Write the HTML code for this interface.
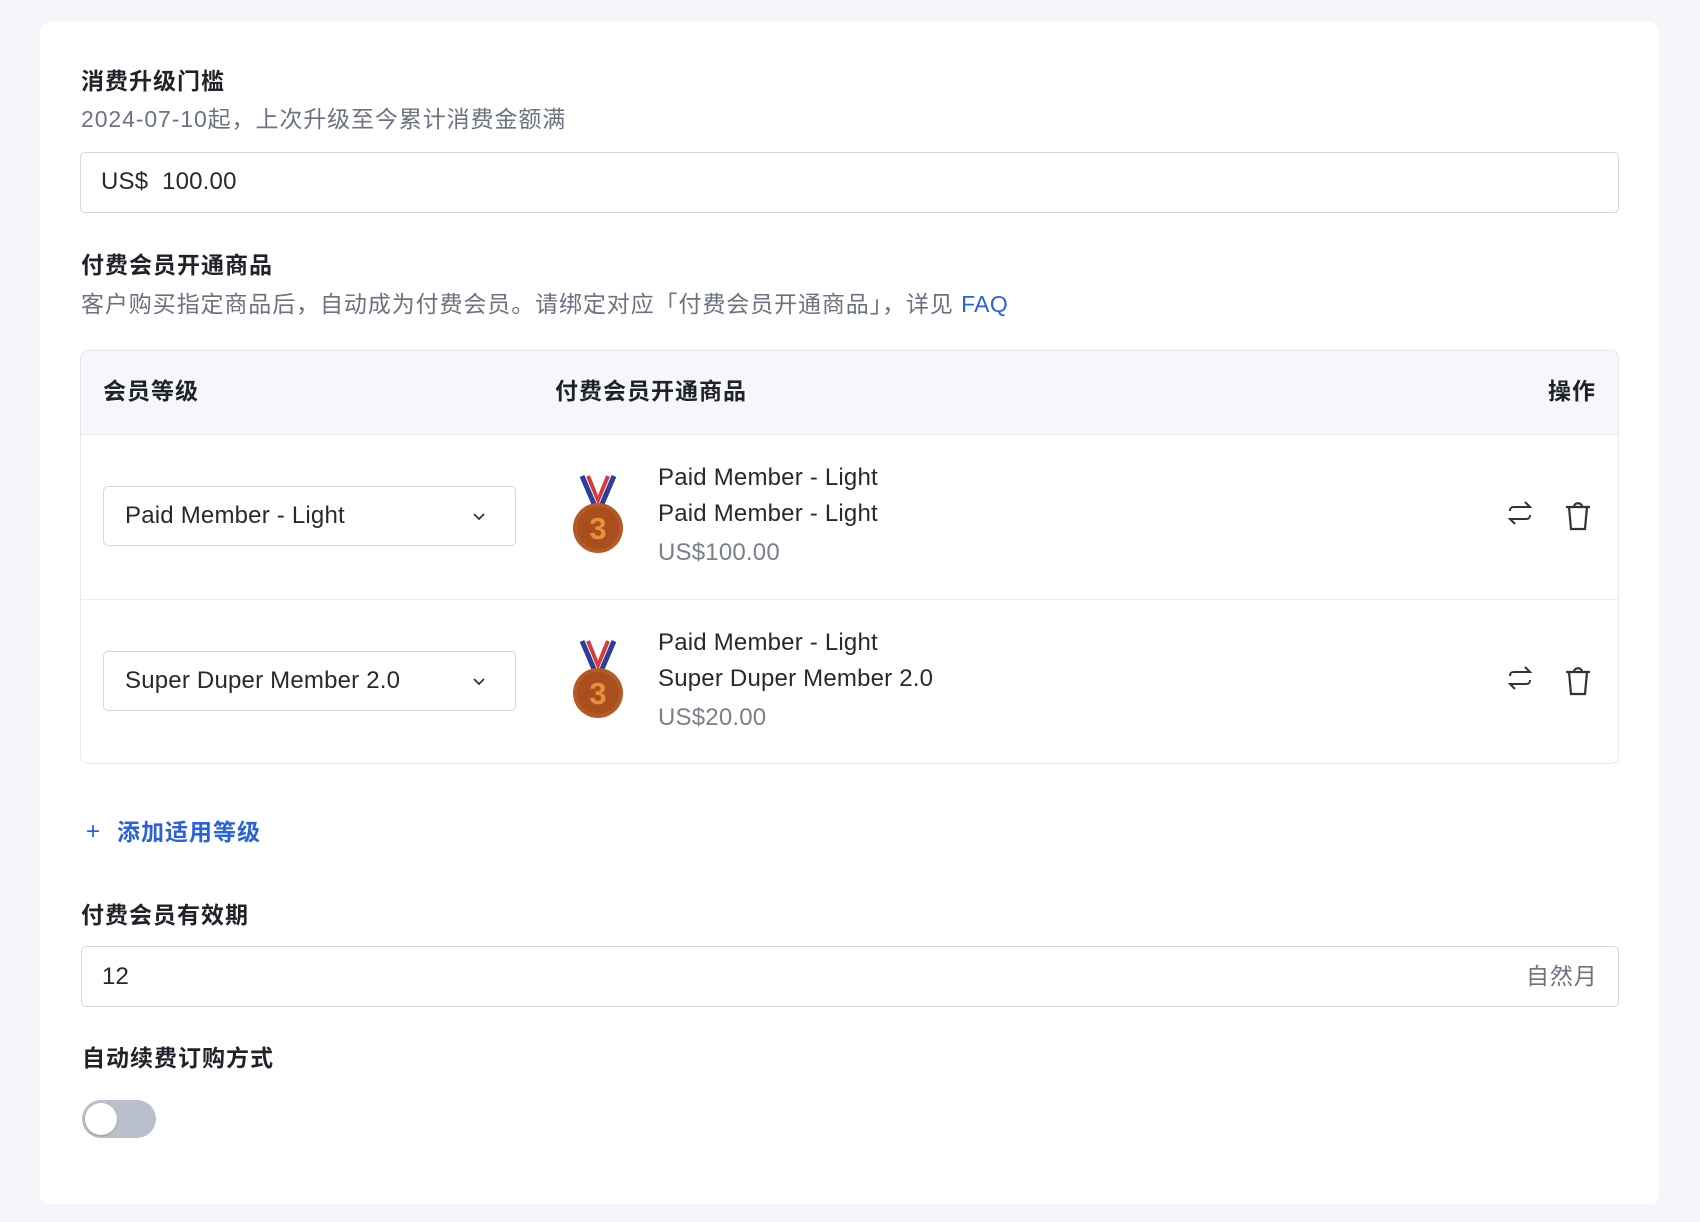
<!DOCTYPE html>
<html><head><meta charset="utf-8"><style>
*{box-sizing:border-box;margin:0;padding:0}
body{width:1700px;height:1222px;background:#f5f6fa;font-family:"Liberation Sans","Noto Sans CJK SC",sans-serif;color:#1f2329;position:relative;overflow:hidden}
.card{position:absolute;left:40px;top:22px;width:1619px;height:1182px;background:#fff;border-radius:10px}
.a{position:absolute;white-space:nowrap;line-height:1}
.t{font-size:23px;font-weight:bold;color:#1f2329;letter-spacing:1px}
.s{font-size:23px;color:#6b7280;letter-spacing:0.9px}
.box{position:absolute;border:1.5px solid #d5d8de;border-radius:5px;background:#fff}
.n{font-size:24px;color:#262a30;letter-spacing:0.2px}
</style></head><body>
<div class="card"></div>
<div class="a t" style="left:81px;top:70px">消费升级门槛</div>
<div class="a s" style="left:81px;top:108px">2024-07-10起，上次升级至今累计消费金额满</div>
<div class="box" style="left:80px;top:152px;width:1539px;height:61px"></div>
<div class="a n" style="left:101px;top:170px">US$&nbsp; 100.00</div>

<div class="a t" style="left:81px;top:254px">付费会员开通商品</div>
<div class="a s" style="left:81px;top:293px">客户购买指定商品后，自动成为付费会员。请绑定对应「付费会员开通商品」，详见 <span style="color:#2a62d8;letter-spacing:0.3px">FAQ</span></div>

<div style="position:absolute;left:80px;top:350px;width:1539px;height:414px;border:1.5px solid #e6e8ec;border-radius:8px;overflow:hidden">
 <div style="height:84px;background:#f6f7fa;border-bottom:1.5px solid #eceef1"></div>
 <div style="height:165px;border-bottom:1.5px solid #eceef1"></div>
</div>
<div class="a t" style="left:103px;top:380px">会员等级</div>
<div class="a t" style="left:555px;top:380px">付费会员开通商品</div>
<div class="a t" style="left:1548px;top:380px">操作</div>

<div id="r1">
<div class="box" style="left:103px;top:486px;width:413px;height:60px"></div>
<div class="a n" style="left:125px;top:504px">Paid Member - Light</div>
<svg class="a" style="left:471px;top:508px" width="16" height="16" viewBox="0 0 16 16"><path d="M3 6l5 5 5-5" fill="none" stroke="#333" stroke-width="1.8"/></svg>
<svg class="a" style="left:568px;top:472px" width="60" height="86" viewBox="0 0 60 86"><path d="M14 4l12 28M46 4L34 32" stroke="#2c3e9c" stroke-width="5"/><path d="M20 4l10 24 10-24" fill="none" stroke="#d63b3b" stroke-width="4"/><path d="M24 4l6 16 6-16" fill="none" stroke="#fff" stroke-width="2.5"/><circle cx="30" cy="56" r="25" fill="#b55a26"/><circle cx="30" cy="56" r="21" fill="#a94f1e"/><text x="30" y="67" text-anchor="middle" font-size="31" font-weight="bold" fill="#e8903c" font-family="Liberation Sans">3</text></svg>
<div class="a n" style="left:658px;top:466px">Paid Member - Light</div>
<div class="a n" style="left:658px;top:502px">Paid Member - Light</div>
<div class="a n" style="left:658px;top:541px;color:#7a8089">US$100.00</div>
<svg class="a" style="left:1505px;top:498px" width="30" height="30" viewBox="0 0 30 30" fill="none" stroke="#333" stroke-width="2"><path d="M5 13c0-3 1-4 4-4h16l-5-5M25 17c0 3-1 4-4 4H5l5 5"/></svg>
<svg class="a" style="left:1563px;top:500px" width="30" height="32" viewBox="0 0 30 32" fill="none" stroke="#333" stroke-width="2.2"><path d="M3 7h24M6 7l2 22h14l2-22M11 7c0-5 8-5 8 0"/></svg>
</div>
<div id="r2" style="position:absolute;left:0;top:165px;width:1700px">
<div class="box" style="left:103px;top:486px;width:413px;height:60px"></div>
<div class="a n" style="left:125px;top:504px">Super Duper Member 2.0</div>
<svg class="a" style="left:471px;top:508px" width="16" height="16" viewBox="0 0 16 16"><path d="M3 6l5 5 5-5" fill="none" stroke="#333" stroke-width="1.8"/></svg>
<svg class="a" style="left:568px;top:472px" width="60" height="86" viewBox="0 0 60 86"><path d="M14 4l12 28M46 4L34 32" stroke="#2c3e9c" stroke-width="5"/><path d="M20 4l10 24 10-24" fill="none" stroke="#d63b3b" stroke-width="4"/><path d="M24 4l6 16 6-16" fill="none" stroke="#fff" stroke-width="2.5"/><circle cx="30" cy="56" r="25" fill="#b55a26"/><circle cx="30" cy="56" r="21" fill="#a94f1e"/><text x="30" y="67" text-anchor="middle" font-size="31" font-weight="bold" fill="#e8903c" font-family="Liberation Sans">3</text></svg>
<div class="a n" style="left:658px;top:466px">Paid Member - Light</div>
<div class="a n" style="left:658px;top:502px">Super Duper Member 2.0</div>
<div class="a n" style="left:658px;top:541px;color:#7a8089">US$20.00</div>
<svg class="a" style="left:1505px;top:498px" width="30" height="30" viewBox="0 0 30 30" fill="none" stroke="#333" stroke-width="2"><path d="M5 13c0-3 1-4 4-4h16l-5-5M25 17c0 3-1 4-4 4H5l5 5"/></svg>
<svg class="a" style="left:1563px;top:500px" width="30" height="32" viewBox="0 0 30 32" fill="none" stroke="#333" stroke-width="2.2"><path d="M3 7h24M6 7l2 22h14l2-22M11 7c0-5 8-5 8 0"/></svg>
</div>

<div class="a" style="left:86px;top:820px;font-size:24px;color:#2a62d8">+</div>
<div class="a" style="left:117px;top:821px;font-size:23px;font-weight:bold;color:#2a62d8;letter-spacing:1px">添加适用等级</div>

<div class="a t" style="left:81px;top:904px">付费会员有效期</div>
<div class="box" style="left:81px;top:946px;width:1538px;height:61px"></div>
<div class="a n" style="left:102px;top:965px">12</div>
<div class="a s" style="left:1526px;top:965px">自然月</div>

<div class="a t" style="left:82px;top:1047px">自动续费订购方式</div>
<div class="a" style="left:82px;top:1100px;width:74px;height:38px;border-radius:19px;background:#b9bfcb"></div>
<div class="a" style="left:85px;top:1103px;width:32px;height:32px;border-radius:50%;background:#fff;box-shadow:0 1px 2px rgba(0,0,0,.2)"></div>
</body></html>
